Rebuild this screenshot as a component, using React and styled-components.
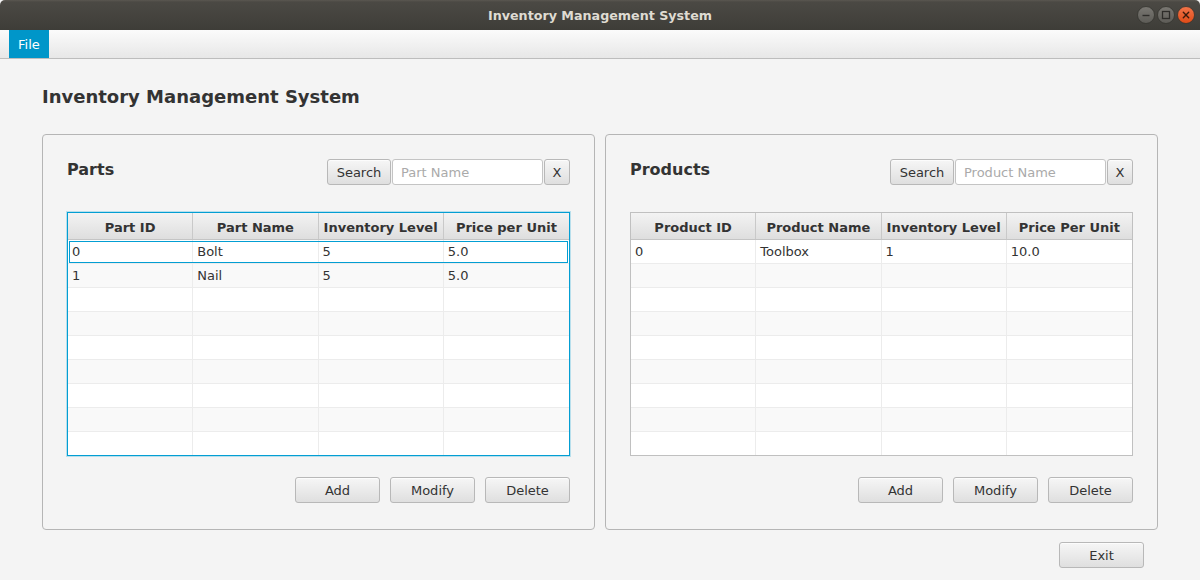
import React from "react";
import styled, { createGlobalStyle, css } from "styled-components";

const Global = createGlobalStyle`
  html, body { margin: 0; padding: 0; background: #f4f4f4; }
  body { font-family: "DejaVu Sans", "Liberation Sans", sans-serif; font-size: 13px; color: #333; }
  * { box-sizing: border-box; }
`;

const Window = styled.div`
  width: 1200px;
  height: 580px;
  display: flex;
  flex-direction: column;
  background: #f4f4f4;
  overflow: hidden;
`;

const TitleBar = styled.div`
  height: 30px;
  flex: none;
  position: relative;
  display: flex;
  align-items: center;
  justify-content: center;
  background: linear-gradient(to bottom, #5a5751 0px, #4b4944 2px, #3e3d38 100%);
  border-radius: 5px 5px 0 0;
  color: #dfdbd2;
  font-weight: bold;
  font-size: 12.7px;
`;

const Controls = styled.div`
  position: absolute;
  right: 5px;
  top: 6px;
  display: flex;
  gap: 2px;
`;

const CtrlSvg = styled.svg`
  display: block;
`;

const WinButton = ({ kind }) => {
  const close = kind === "close";
  return (
    <CtrlSvg width="18" height="18" viewBox="0 0 18 18">
      <defs>
        <linearGradient id={`g-${kind}`} x1="0" y1="0" x2="0" y2="1">
          <stop offset="0" stopColor={close ? "#f2754a" : "#7a7873"} />
          <stop offset="1" stopColor={close ? "#df4a16" : "#5c5b56"} />
        </linearGradient>
      </defs>
      <circle cx="9" cy="9" r="8.5" fill={`url(#g-${kind})`} stroke="#34332f" strokeWidth="0.8" />
      {kind === "min" && <line x1="5.5" y1="9.5" x2="12.5" y2="9.5" stroke="#2e2d2a" strokeWidth="1.4" />}
      {kind === "max" && <rect x="5.5" y="5.5" width="7" height="7" fill="none" stroke="#2e2d2a" strokeWidth="1.3" />}
      {close && (
        <g stroke="#3a1a0c" strokeWidth="1.4" strokeLinecap="round">
          <line x1="6.3" y1="6.3" x2="11.7" y2="11.7" />
          <line x1="11.7" y1="6.3" x2="6.3" y2="11.7" />
        </g>
      )}
    </CtrlSvg>
  );
};

const MenuBar = styled.div`
  height: 29px;
  flex: none;
  display: flex;
  padding-left: 9px;
  background: linear-gradient(to bottom, #fbfbfb, #e7e7e7);
  border-bottom: 1px solid #bdbdbd;
`;

const MenuItem = styled.div`
  height: 28px;
  padding: 0 9px;
  display: flex;
  align-items: center;
  font-size: 13px;
  ${(p) =>
    p.$active
      ? css`
          background: #0096c9;
          color: #fff;
        `
      : css`
          color: #333;
        `}
`;

const Main = styled.div`
  flex: 1;
  display: flex;
  flex-direction: column;
  padding: 27px 42px 0 42px;
`;

const Heading = styled.h1`
  margin: 0 0 26px 0;
  font-size: 18px;
  line-height: 22px;
  font-weight: bold;
  color: #333;
`;

const Panels = styled.div`
  display: grid;
  grid-template-columns: 553px 553px;
  gap: 10px;
`;

const Panel = styled.section`
  height: 396px;
  border: 1px solid #b5b5b5;
  border-radius: 4px;
  padding: 24px 24px 0 24px;
  display: flex;
  flex-direction: column;
`;

const PanelHeader = styled.div`
  display: flex;
  justify-content: space-between;
  align-items: flex-start;
  height: 26px;
  margin-bottom: 27px;
`;

const PanelTitle = styled.h2`
  margin: 0;
  font-size: 16px;
  line-height: 22px;
  font-weight: bold;
  color: #333;
`;

const SearchGroup = styled.div`
  display: flex;
  gap: 1px;
`;

const Button = styled.button`
  width: ${(p) => p.$w || 85}px;
  height: 26px;
  padding: 0;
  font-family: "DejaVu Sans", "Liberation Sans", sans-serif;
  font-size: 13px;
  color: #333;
  border: 1px solid #b8b8b8;
  border-radius: 3px;
  background: linear-gradient(to bottom, #f6f6f6, #dfdfdf);
  box-shadow: inset 0 1px 0 rgba(255, 255, 255, 0.7);
  cursor: default;
`;

const TextField = styled.input`
  width: 151px;
  height: 26px;
  padding: 0 8px;
  font-family: "DejaVu Sans", "Liberation Sans", sans-serif;
  font-size: 13px;
  color: #333;
  background: #fff;
  border: 1px solid #c4c4c4;
  border-radius: 3px;
  outline: none;
  &::placeholder { color: #aaaaaa; }
`;

const Table = styled.div`
  height: 244px;
  border: 1px solid ${(p) => (p.$focused ? "#039ed3" : "#c0c0c0")};
  box-shadow: ${(p) => (p.$focused ? "0 0 0 1px rgba(3,158,211,0.25)" : "none")};
  background: #fff;
  overflow: hidden;
`;

const HeaderRow = styled.div`
  display: grid;
  grid-template-columns: repeat(4, 1fr);
  height: 27px;
  background: linear-gradient(to bottom, #f3f3f3, #dedede);
  border-bottom: 1px solid #c4c4c4;
`;

const HeaderCell = styled.div`
  display: flex;
  align-items: center;
  justify-content: center;
  padding-top: 2px;
  font-weight: bold;
  font-size: 13px;
  color: #333;
  border-right: 1px solid #c9c9c9;
  &:last-child { border-right: none; }
`;

const Row = styled.div`
  display: grid;
  grid-template-columns: repeat(4, 1fr);
  height: 24px;
  border-bottom: 1px solid #ececec;
  background: ${(p) => (p.$odd ? "#f9f9f9" : "#ffffff")};
  ${(p) =>
    p.$focus &&
    css`
      outline: 1px solid #039ed3;
      outline-offset: -2px;
    `}
`;

const Cell = styled.div`
  display: flex;
  align-items: center;
  padding-left: 4px;
  font-size: 13px;
  color: #333;
  border-right: 1px solid #ececec;
  white-space: nowrap;
  &:last-child { border-right: none; }
`;

const ActionRow = styled.div`
  display: flex;
  justify-content: flex-end;
  gap: 10px;
  margin-top: 21px;
`;

const Footer = styled.div`
  display: flex;
  justify-content: flex-end;
  padding-right: 14px;
  margin-top: 12px;
`;

const ROWS = 10;

function DataTable({ columns, data, focused }) {
  const rows = Array.from({ length: ROWS }, (_, i) => data[i] || null);
  return (
    <Table $focused={focused}>
      <HeaderRow>
        {columns.map((c) => (
          <HeaderCell key={c}>{c}</HeaderCell>
        ))}
      </HeaderRow>
      {rows.map((r, i) => (
        <Row key={i} $odd={i % 2 === 1} $focus={focused && i === 0}>
          {columns.map((c, j) => (
            <Cell key={c}>{r ? r[j] : ""}</Cell>
          ))}
        </Row>
      ))}
    </Table>
  );
}

function InventoryPanel({ title, placeholder, columns, data, focused }) {
  return (
    <Panel>
      <PanelHeader>
        <PanelTitle>{title}</PanelTitle>
        <SearchGroup>
          <Button $w={64}>Search</Button>
          <TextField placeholder={placeholder} />
          <Button $w={26}>X</Button>
        </SearchGroup>
      </PanelHeader>
      <DataTable columns={columns} data={data} focused={focused} />
      <ActionRow>
        <Button>Add</Button>
        <Button>Modify</Button>
        <Button>Delete</Button>
      </ActionRow>
    </Panel>
  );
}

export default function App() {
  return (
    <>
      <Global />
      <Window>
        <TitleBar>
          Inventory Management System
          <Controls>
            <WinButton kind="min" />
            <WinButton kind="max" />
            <WinButton kind="close" />
          </Controls>
        </TitleBar>
        <MenuBar>
          <MenuItem $active>File</MenuItem>
        </MenuBar>
        <Main>
          <Heading>Inventory Management System</Heading>
          <Panels>
            <InventoryPanel
              title="Parts"
              placeholder="Part Name"
              columns={["Part ID", "Part Name", "Inventory Level", "Price per Unit"]}
              data={[
                ["0", "Bolt", "5", "5.0"],
                ["1", "Nail", "5", "5.0"],
              ]}
              focused
            />
            <InventoryPanel
              title="Products"
              placeholder="Product Name"
              columns={["Product ID", "Product Name", "Inventory Level", "Price Per Unit"]}
              data={[["0", "Toolbox", "1", "10.0"]]}
            />
          </Panels>
          <Footer>
            <Button>Exit</Button>
          </Footer>
        </Main>
      </Window>
    </>
  );
}
